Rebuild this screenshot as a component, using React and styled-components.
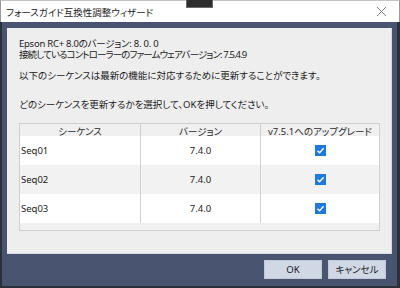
import React from "react";
import styled, { createGlobalStyle } from "styled-components";

const GlobalStyle = createGlobalStyle`
    html, body {
        margin: 0;
        padding: 0;
        background: #ffffff;
    }
    body {
        font-family: "Noto Sans", "Noto Sans CJK JP", sans-serif;
        font-feature-settings: "palt";
        color: #1b1b1b;
    }
`;

const Window = styled.div`
    width: 400px;
    height: 288px;
    display: flex;
    flex-direction: column;
    box-sizing: border-box;
    position: relative;
`;

const TitleBar = styled.div`
    height: 22px;
    flex: none;
    box-sizing: border-box;
    border-top: 1px solid #c4c4c4;
    border-left: 1px solid #9a9a9a;
    border-right: 1px solid #9a9a9a;
    background: #ffffff;
    display: flex;
    align-items: center;
    justify-content: space-between;
    padding: 0 12px 0 5px;
    font-size: 9.5px;
`;

const Handle = styled.div`
    position: absolute;
    left: 186px;
    top: 0;
    width: 27px;
    height: 8px;
    box-sizing: border-box;
    background: #2d2d2d;
    border: 1px solid #6a6a6a;
    border-top: none;
`;

const Frame = styled.div`
    flex: 1;
    display: flex;
    flex-direction: column;
    background: #485470;
    border-left: 2px solid #2c3039;
    border-right: 3px solid #2c3039;
    border-bottom: 2px solid #2c3039;
`;

const Panel = styled.div`
    margin: 6px 5px 0 5px;
    height: 226px;
    box-sizing: border-box;
    background: #eeeeee;
    border-right: 1px solid #d9d9d9;
    border-bottom: 1px solid #d9d9d9;
    padding: 10px 11px 0 12px;
    font-size: 9.5px;
`;

const Line = styled.div`
    line-height: 11px;
    height: 11px;
    margin-top: ${(p) => p.gap || 0}px;
    letter-spacing: ${(p) => p.tight || 0}px;
    white-space: nowrap;
`;

const Table = styled.div`
    margin-top: 13px;
    height: 108px;
    box-sizing: border-box;
    border: 1px solid #cfcfcf;
    background: #f0f0f0;
    display: flex;
    flex-direction: column;
`;

const Row = styled.div`
    display: grid;
    grid-template-columns: 120px 120px 1fr;
    height: ${(p) => (p.header ? 12 : 29)}px;
    background: ${(p) => (p.header ? "#f0f0f0" : p.alt ? "#f2f2f2" : "#ffffff")};
`;

const Cell = styled.div`
    display: flex;
    align-items: center;
    justify-content: ${(p) => (p.left ? "flex-start" : "center")};
    padding-left: ${(p) => (p.left ? 1 : 0)}px;
    border-left: ${(p) => (p.first ? "none" : "1px solid #d0d0d0")};
    color: ${(p) => (p.head ? "#2a2a2a" : "#1b1b1b")};
    font-size: 9.5px;
`;

const Check = styled.div`
    width: 11px;
    height: 11px;
    background: #1f7ae0;
    display: flex;
    align-items: center;
    justify-content: center;
`;

const Footer = styled.div`
    flex: 1;
    display: flex;
    align-items: center;
    justify-content: flex-end;
    gap: 6px;
    padding: 0 11px 2px 0;
`;

const Button = styled.button`
    width: 58px;
    height: 19px;
    box-sizing: border-box;
    background: #d0d8e6;
    border: 1px solid #c2c9d6;
    font-family: inherit;
    font-feature-settings: "palt";
    font-size: 9.5px;
    color: #1b1b1b;
    padding: 0;
`;

const Close = () => (
    <svg width="11" height="11" viewBox="0 0 11 11">
        <path d="M1 1 L10 10 M10 1 L1 10" stroke="#7a7a7a" strokeWidth="1" />
    </svg>
);

const Tick = () => (
    <svg width="9" height="9" viewBox="0 0 9 9">
        <path d="M1.5 4.8 L3.6 6.8 L7.6 2.2" stroke="#ffffff" strokeWidth="1.4" fill="none" />
    </svg>
);

const rows = ["Seq01", "Seq02", "Seq03"];

export default function App() {
    return (
        <Window>
            <GlobalStyle />
            <Handle />
            <TitleBar>
                <span>フォースガイド互換性調整ウィザード</span>
                <Close />
            </TitleBar>
            <Frame>
                <Panel>
                    <Line tight={-0.25}>Epson RC+ 8.0のバージョン: 8. 0. 0</Line>
                    <Line tight={-0.9}>接続しているコントローラーのファームウェアバージョン: 7.5.4.9</Line>
                    <Line gap={9.5}>以下のシーケンスは最新の機能に対応するために更新することができます。</Line>
                    <Line gap={18.5}>どのシーケンスを更新するかを選択して、OKを押してください。</Line>
                    <Table>
                        <Row header>
                            <Cell first head>シーケンス</Cell>
                            <Cell head>バージョン</Cell>
                            <Cell head>v7.5.1へのアップグレード</Cell>
                        </Row>
                        {rows.map((name, i) => (
                            <Row key={name} alt={i % 2 === 1}>
                                <Cell first left>{name}</Cell>
                                <Cell>7.4.0</Cell>
                                <Cell>
                                    <Check>
                                        <Tick />
                                    </Check>
                                </Cell>
                            </Row>
                        ))}
                    </Table>
                </Panel>
                <Footer>
                    <Button>OK</Button>
                    <Button>キャンセル</Button>
                </Footer>
            </Frame>
        </Window>
    );
}
